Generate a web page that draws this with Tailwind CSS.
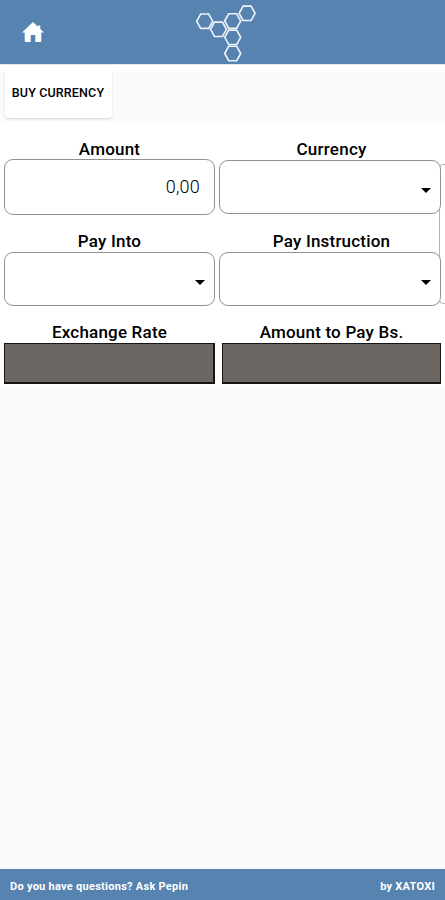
<!DOCTYPE html>
<html lang="en">
<head>
<meta charset="utf-8">
<title>Buy Currency</title>
<script src="https://cdn.jsdelivr.net/npm/@tailwindcss/browser@4"></script>
</head>
<body class="w-[445px] h-[900px] overflow-hidden bg-[#fafafa] font-[Roboto,sans-serif] text-black flex flex-col">
<header class="relative h-16 shrink-0 bg-[#5783b1] flex items-center pl-[22px]">
  <svg class="w-[22px] h-[20px]" viewBox="0 0 22 20" fill="#fff"><path d="M11 0 0 10.500h2.700V19q0 1 1 1H8.700V13h4.600v7h5q1 0 1-1v-8.500H22L18.300 6.900V3.500h-2.300v1.200z"/></svg>
  <svg class="absolute left-[190px] top-0 w-[72px] h-16" viewBox="190 0 72 64" fill="none" stroke="#edf4fa" stroke-width="1.600">
    <defs><path id="hex" d="M-8 0-4-7.200H4L8 0 4 7.200H-4Z"/></defs>
    <use href="#hex" x="204.700" y="21.200"/><use href="#hex" x="218.500" y="29.300"/><use href="#hex" x="232.700" y="21"/><use href="#hex" x="247.100" y="13.300"/><use href="#hex" x="232.700" y="37.300"/><use href="#hex" x="232.700" y="53.500"/>
  </svg>
</header>
<nav class="h-[57px] shrink-0 border-t border-[#dfe8f2] bg-linear-to-b from-white from-10% to-[#fafafa] to-12% pl-[5px] pt-[5px]">
  <button class="block w-[107px] h-[48px] rounded-b-[4px] bg-white shadow-[0_1px_2px_rgba(0,0,0,0.16)] text-[12.500px] font-medium tracking-[0.15px] whitespace-nowrap pb-[2px] pr-[1px]">BUY CURRENCY</button>
</nav>
<main class="relative h-[264px] shrink-0 bg-white pl-1 pt-[18px]">
  <div class="absolute left-[439px] top-[43px] w-[20px] h-[140px] border border-[#b5b5b5] rounded-[4px]"></div>
  <section class="relative flex gap-1 h-[92px]">
    <div class="w-[211px]">
      <h2 class="h-5 leading-5 text-center text-[17px] font-medium tracking-[0.2px]">Amount</h2>
      <div class="h-[56px] border border-[#929292] rounded-[9px] bg-white flex items-center justify-end pr-[14px] pb-[2px] text-[18px] font-light tracking-[0.2px]">0,00</div>
    </div>
    <div class="w-[222px] pt-px">
      <h2 class="h-5 leading-[19px] text-center text-[17px] font-medium tracking-[0.25px] pl-[3px]">Currency</h2>
      <div class="h-[54px] border border-[#929292] rounded-[9px] bg-white flex items-center justify-end pr-[9px] pt-[6px]"><svg class="w-[10px] h-[5px]" viewBox="0 0 10 5"><path d="M0 0h10L5 5z"/></svg></div>
    </div>
  </section>
  <section class="relative flex gap-1 h-[92px]">
    <div class="w-[211px]">
      <h2 class="h-[21px] leading-5 text-center text-[17px] font-medium tracking-[0.2px]">Pay Into</h2>
      <div class="h-[54px] border border-[#929292] rounded-[9px] bg-white flex items-center justify-end pr-[9px] pt-[6px]"><svg class="w-[10px] h-[5px]" viewBox="0 0 10 5"><path d="M0 0h10L5 5z"/></svg></div>
    </div>
    <div class="w-[222px]">
      <h2 class="h-[21px] leading-5 text-center text-[17px] font-medium tracking-[0.2px] pl-[3px]">Pay Instruction</h2>
      <div class="h-[54px] border border-[#929292] rounded-[9px] bg-white flex items-center justify-end pr-[9px] pt-[6px]"><svg class="w-[10px] h-[5px]" viewBox="0 0 10 5"><path d="M0 0h10L5 5z"/></svg></div>
    </div>
  </section>
  <section class="flex gap-[7px]">
    <div class="w-[211px]">
      <h2 class="h-5 leading-[19px] text-center text-[17px] font-medium tracking-[0.2px]">Exchange Rate</h2>
      <div class="h-[41px] border border-r-2 border-b-2 border-[#171615] bg-[#6c6763]"></div>
    </div>
    <div class="w-[219px]">
      <h2 class="h-5 leading-[19px] text-center text-[17px] font-medium tracking-[0.2px]">Amount to Pay Bs.</h2>
      <div class="h-[41px] border border-b-2 border-[#171615] bg-[#6c6763]"></div>
    </div>
  </section>
</main>
<footer class="mt-auto h-[31px] shrink-0 bg-[#5783b1] flex items-center justify-between pl-[10px] pr-[10px] pt-[5px] text-white text-[11px] font-bold">
  <span class="tracking-[0.27px]">Do you have questions? Ask Pepin</span><span class="tracking-[0.27px]">by XATOXI</span>
</footer>
</body>
</html>
